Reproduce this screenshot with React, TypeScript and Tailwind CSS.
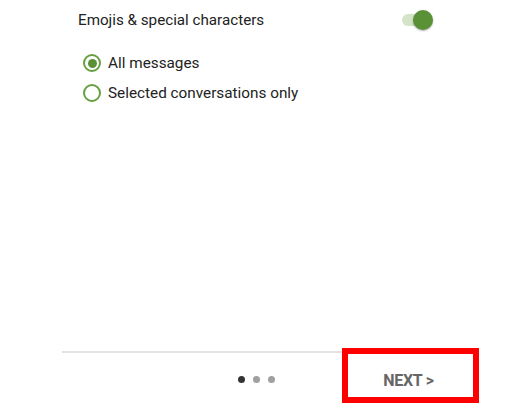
import React from "react";

export default function App() {
  return (
    <div
      className="relative w-[523px] h-[411px] bg-white flex flex-col overflow-hidden"
      style={{ fontFamily: "Roboto, 'Noto Sans', sans-serif" }}
    >
      <div className="pt-[10px] pl-[78px] pr-[90px] h-[30px] flex items-center justify-between">
        <span className="text-[15.2px] leading-[20px] text-[#222222]">Emojis &amp; special characters</span>
        <div className="relative w-[31px] h-[20px]">
          <div className="absolute left-0 top-[4px] w-[28px] h-[12px] rounded-full bg-[#d3e4c8]" />
          <div className="absolute left-[11px] top-0 w-[20px] h-[20px] rounded-full bg-[#5b9136] shadow-[0_1px_2px_rgba(0,0,0,0.3)]" />
        </div>
      </div>

      <div className="mt-[18px] pl-[83px] flex flex-col">
        <div className="h-[30px] flex items-center gap-[7px]">
          <div className="w-[18px] h-[18px] rounded-full border-2 border-[#67a040] flex items-center justify-center">
            <div className="w-[9px] h-[9px] rounded-full bg-[#5b9136]" />
          </div>
          <span className="text-[15.3px] text-[#222222]">All messages</span>
        </div>
        <div className="h-[30px] flex items-center gap-[7px]">
          <div className="w-[18px] h-[18px] rounded-full border-2 border-[#67a040]" />
          <span className="text-[15.3px] text-[#222222]">Selected conversations only</span>
        </div>
      </div>

      <div className="flex-1" />

      <div className="ml-[62px] mr-[45px] h-[2px] bg-[#e3e3e3]" />
      <div className="h-[52px] flex items-center">
        <div className="w-[343px] pl-[238px] flex items-center gap-[8px]">
          <div className="w-[7px] h-[7px] rounded-full bg-[#333333]" />
          <div className="w-[7px] h-[7px] rounded-full bg-[#a0a0a0]" />
          <div className="w-[7px] h-[7px] rounded-full bg-[#a0a0a0]" />
        </div>
        <div className="w-[131px] text-center text-[16px] font-bold text-[#666666] tracking-[-0.3px] pt-[3px]">
          NEXT &gt;
        </div>
      </div>
      <div className="h-[6px]" />

      <div className="absolute left-[342px] top-[348px] w-[137px] h-[55px] border-[6px] border-[#ff0000]" />
    </div>
  );
}
